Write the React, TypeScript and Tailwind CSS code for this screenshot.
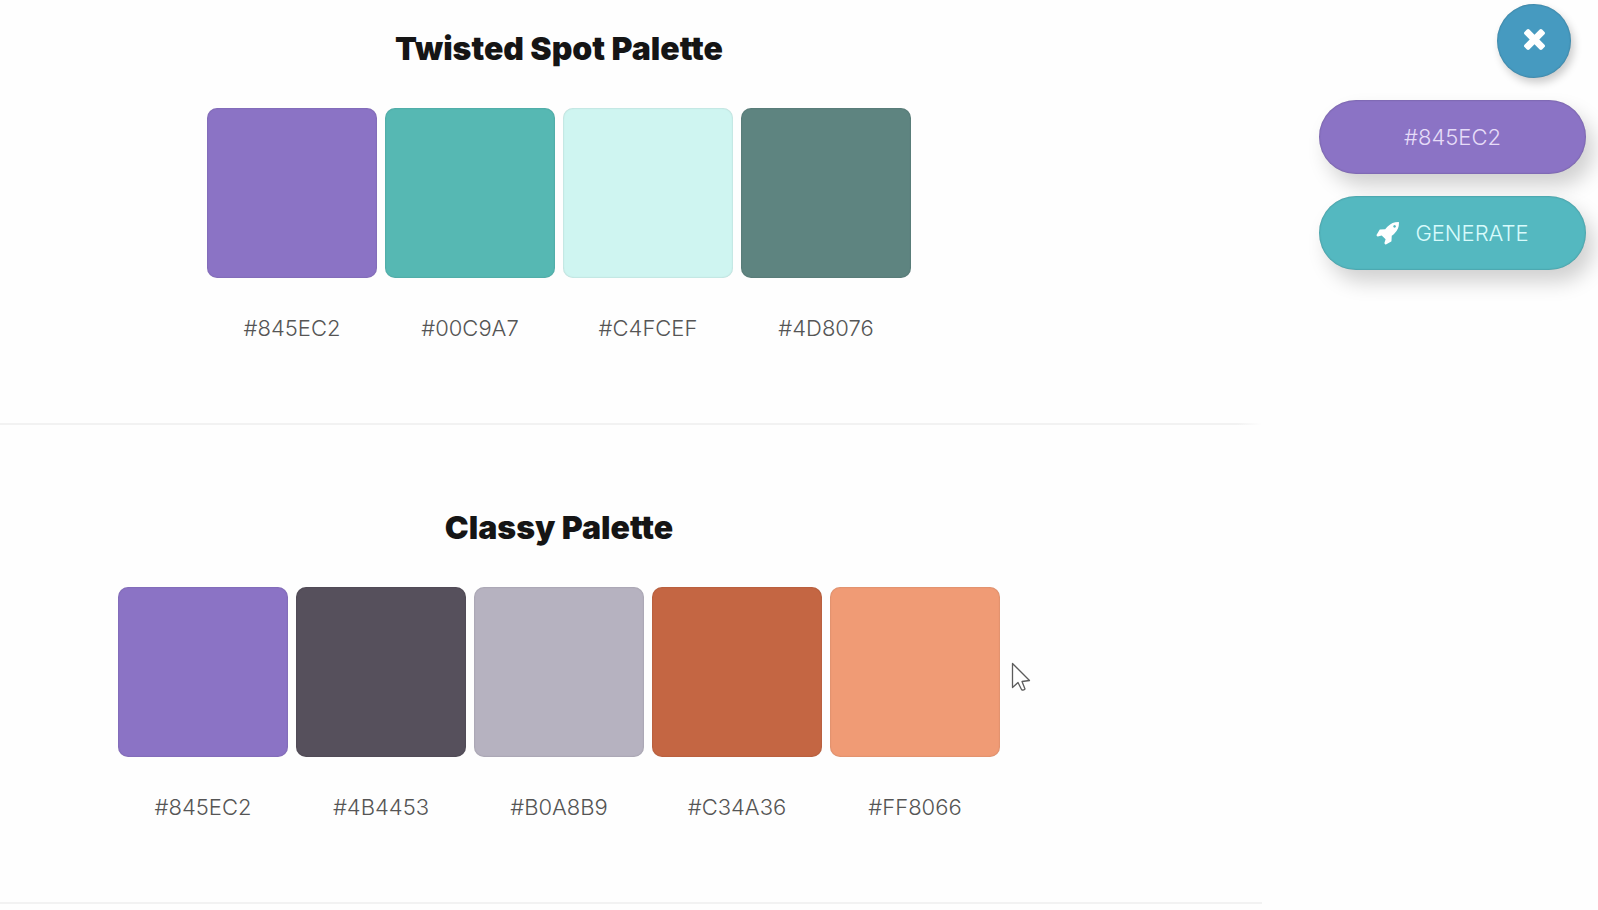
type Palette = { title: string; colors: { hex: string; fill: string }[] };

const palettes: Palette[] = [
  {
    title: "Twisted Spot Palette",
    colors: [
      { hex: "#845EC2", fill: "bg-[#8b73c5]" },
      { hex: "#00C9A7", fill: "bg-[#56b8b3]" },
      { hex: "#C4FCEF", fill: "bg-[#cff5f1]" },
      { hex: "#4D8076", fill: "bg-[#5e8480]" },
    ],
  },
  {
    title: "Classy Palette",
    colors: [
      { hex: "#845EC2", fill: "bg-[#8b73c5]" },
      { hex: "#4B4453", fill: "bg-[#56505c]" },
      { hex: "#B0A8B9", fill: "bg-[#b6b2c0]" },
      { hex: "#C34A36", fill: "bg-[#c46643]" },
      { hex: "#FF8066", fill: "bg-[#f09b75]" },
    ],
  },
];

function CloseIcon() {
  return (
    <svg viewBox="110 238 1188 1188" className="size-[21px] fill-white" aria-hidden="true">
      <path d="M1298 1194q0 40-28 68l-136 136q-28 28-68 28t-68-28l-294-294-294 294q-28 28-68 28t-68-28l-136-136q-28-28-28-68t28-68l294-294-294-294q-28-28-28-68t28-68l136-136q28-28 68-28t68 28l294 294 294-294q28-28 68-28t68 28l136 136q28 28 28 68t-28 68l-294 294 294 294q28 28 28 68z" />
    </svg>
  );
}

function RocketIcon() {
  return (
    <svg viewBox="0 128 1664 1664" className="size-[23px] shrink-0 fill-white" aria-hidden="true">
      <path d="M1440 448q0-40-28-68t-68-28-68 28-28 68 28 68 68 28 68-28 28-68zm224-288q0 249-75.5 430.5t-253.5 360.5q-81 80-195 176l-20 379q-2 16-16 26l-384 224q-7 4-16 4-12 0-23-9l-64-64q-13-14-8-32l85-276-281-281-276 85q-3 1-9 1-14 0-23-9l-64-64q-17-19-5-39l224-384q10-14 26-16l379-20q96-114 176-195 188-187 358-258t431-71q14 0 24 9.5t10 22.5z" />
    </svg>
  );
}

function Pointer() {
  return (
    <svg
      viewBox="0 0 20 30"
      className="pointer-events-none absolute top-[75px] left-[181px] h-[30px] w-5"
      aria-hidden="true"
    >
      <path
        d="M1.5 1.5V25.5L7 20.5L10.5 27.500Q12 29 14 27L11 19.5L18.5 18.5Z"
        fill="white"
        stroke="#5c5c5c"
        strokeWidth="1.3"
        strokeLinejoin="round"
      />
    </svg>
  );
}

function PaletteSection({ palette, first }: { palette: Palette; first: boolean }) {
  return (
    <section className={first ? "pt-6" : "pt-[78px]"}>
      <div className="pr-36 text-center">
        <h2 className="text-[32px] leading-[50px] font-black text-[#151515]">{palette.title}</h2>
        <ul className="mt-[34px] flex justify-center gap-2">
          {palette.colors.map((color, i) => (
            <li key={color.hex} className="relative w-[170px]">
              <div
                className={`aspect-square rounded-[10px] shadow-[inset_0_0_2px_rgba(0,0,0,0.2)] ${color.fill}`}
              />
              <p className="mt-9 text-[22px] leading-7 font-light text-[#555]">{color.hex}</p>
              {!first && i === palette.colors.length - 1 && <Pointer />}
            </li>
          ))}
        </ul>
      </div>
      <hr
        className={
          first
            ? "mt-[81px] h-[2px] border-0 bg-linear-to-r from-[#f2f2f2] from-98% to-[#fefefe]"
            : "mt-[81px] h-[2px] border-0 bg-[#f2f2f2]"
        }
      />
    </section>
  );
}

export default function App() {
  return (
    <div className="flex min-h-screen bg-[#fefefe] font-['Inter',sans-serif]">
      <main className="min-w-0 flex-1">
        {palettes.map((palette, i) => (
          <PaletteSection key={palette.title} palette={palette} first={i === 0} />
        ))}
      </main>
      <aside className="flex w-[336px] shrink-0 flex-col pt-1 pr-3 pl-[57px]">
        <button
          type="button"
          aria-label="Close"
          className="mr-[15px] flex size-[74px] items-center justify-center self-end rounded-full bg-[#469ac0] pb-1 shadow-[3px_5px_8px_rgba(0,0,0,0.2),inset_0_0_2px_rgba(0,0,0,0.3)]"
        >
          <CloseIcon />
        </button>
        <input
          type="text"
          aria-label="Base color"
          defaultValue="#845EC2"
          className="mt-[22px] h-[74px] w-full rounded-full bg-[#8b73c5] text-center text-[22px] font-light text-[#e6dcf8] shadow-[8px_12px_20px_rgba(0,0,0,0.18),inset_0_0_2px_rgba(0,0,0,0.3)] outline-none"
        />
        <button
          type="button"
          className="mt-[22px] flex h-[74px] w-full items-center justify-center gap-4 rounded-full bg-[#54b8c0] text-[22px] font-light text-[#d8fbfc] shadow-[8px_12px_20px_rgba(0,0,0,0.18),inset_0_0_2px_rgba(0,0,0,0.3)]"
        >
          <RocketIcon />
          GENERATE
        </button>
      </aside>
    </div>
  );
}
